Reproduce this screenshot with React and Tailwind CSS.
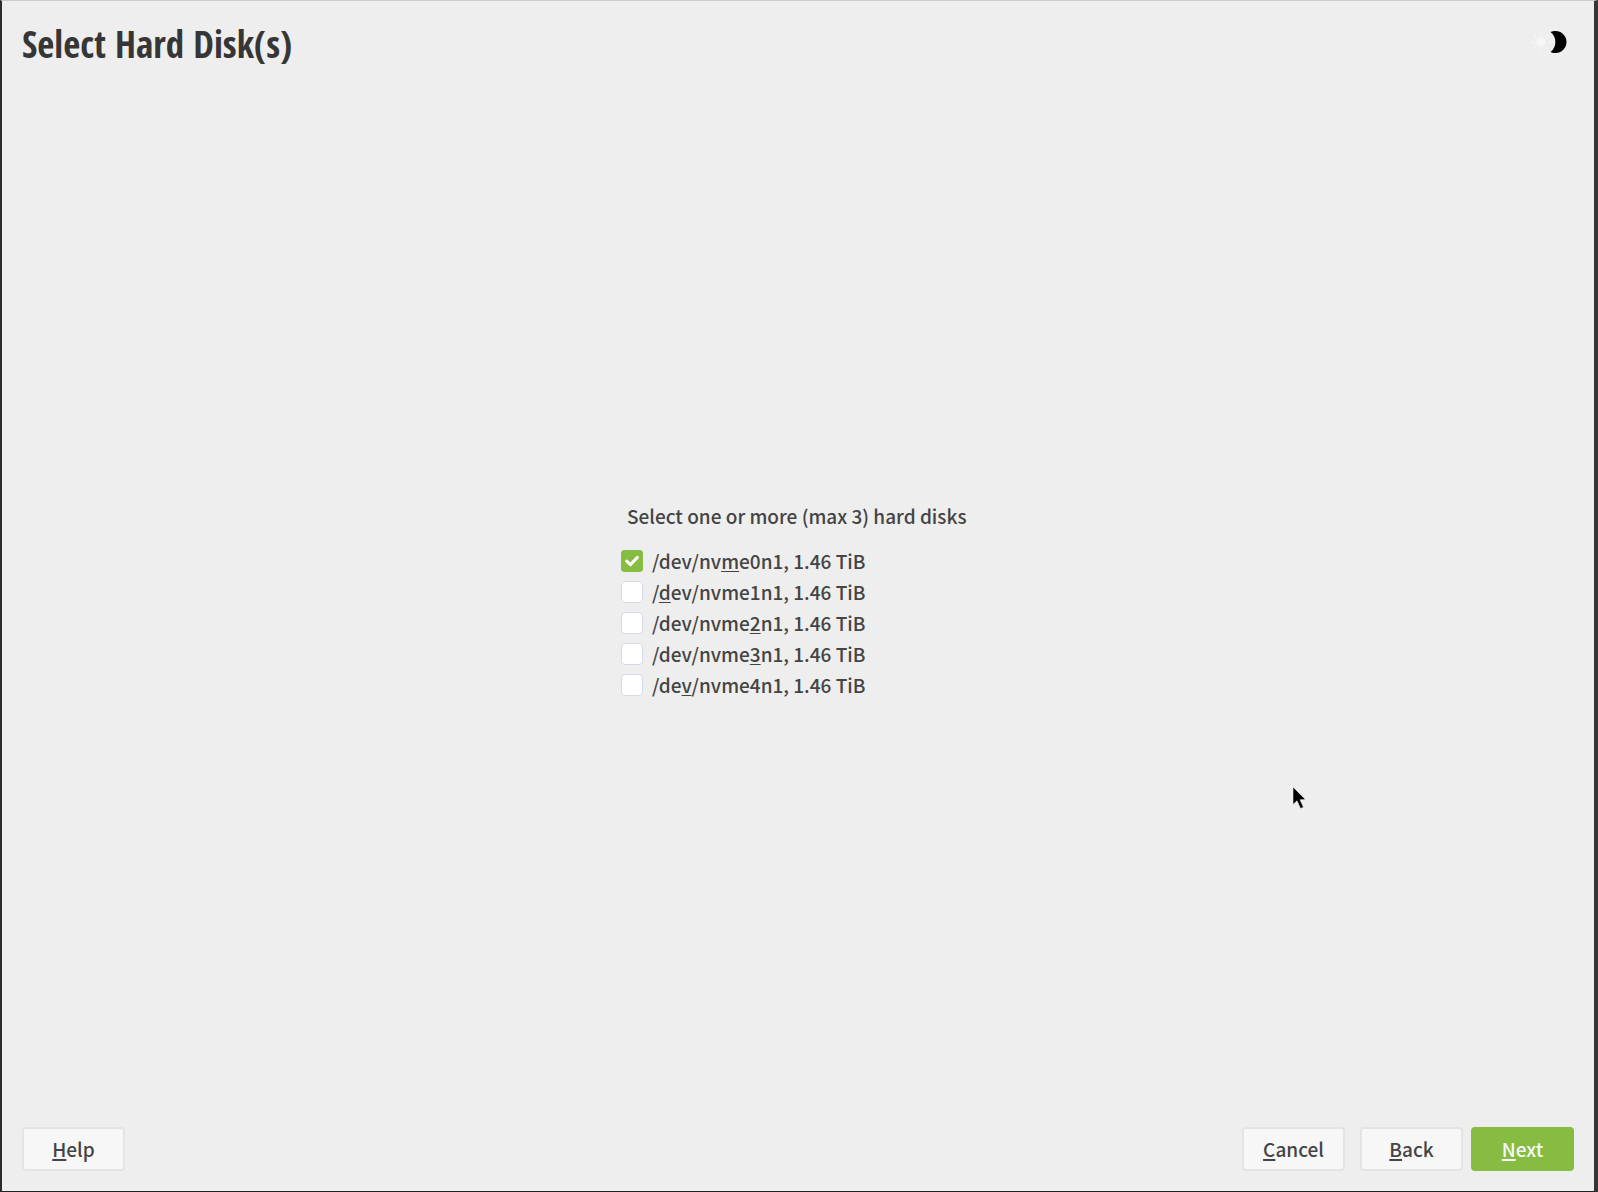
import { useState } from "react";

const disks = [
  { before: "/dev/nv", key: "m", after: "e0n1, 1.46 TiB" },
  { before: "/", key: "d", after: "ev/nvme1n1, 1.46 TiB" },
  { before: "/dev/nvme", key: "2", after: "n1, 1.46 TiB" },
  { before: "/dev/nvme", key: "3", after: "n1, 1.46 TiB" },
  { before: "/de", key: "v", after: "/nvme4n1, 1.46 TiB" },
];

function Mnemonic({ children }) {
  return <span className="underline decoration-1 underline-offset-2">{children}</span>;
}

function DiskOption({ disk, checked, onChange }) {
  return (
    <label className="flex h-[31px] items-center gap-[9px]">
      <span className="grid size-[22px] shrink-0 place-items-center">
        <input
          type="checkbox"
          checked={checked}
          onChange={onChange}
          className="col-start-1 row-start-1 size-[22px] appearance-none rounded-[4px] border border-[#d5d9ea] bg-white checked:rounded-[3px] checked:border-[#86bc42] checked:bg-[#86bc42]"
        />
        {checked && (
          <svg viewBox="0 0 22 22" className="pointer-events-none col-start-1 row-start-1 size-[22px]" aria-hidden="true">
            <path d="M5.6 11.2 L9.4 14.6 L16.4 7.4" fill="none" stroke="#fff" strokeWidth="3" strokeLinecap="round" strokeLinejoin="round" />
          </svg>
        )}
      </span>
      <span className="whitespace-nowrap">
        {disk.before}
        <Mnemonic>{disk.key}</Mnemonic>
        {disk.after}
      </span>
    </label>
  );
}

function FooterButton({ label, primary }) {
  const look = primary
    ? "border-[#86bc42] bg-[#86bc42] text-[#f7f7f7]"
    : "border-[#e4e4e4] bg-[#f7f7f7]";
  return (
    <button type="button" className={`h-11 w-[103px] rounded-[4px] border-2 leading-7 ${look}`}>
      <span className="underline decoration-2 underline-offset-2">{label[0]}</span>
      {label.slice(1)}
    </button>
  );
}

function ThemeIcon() {
  return (
    <svg viewBox="0 0 40 24" className="h-6 w-10" aria-hidden="true">
      <g fill="#f8f8f8" stroke="#f4f4f4" strokeWidth="2" strokeLinecap="round">
        <circle cx="13" cy="12" r="4" />
        <path d="M13 3v1M13 20v1M4 12h1M21 12h1M7 6l.6 .6M18.4 17.4l.6 .6M7 18l.6-.6M18.4 6.6l.6-.6" />
      </g>
      <path d="M22.5 2 C24.5 1 26 1 27.5 1 A11 11 0 0 1 27.5 23 C26 23 24.5 23 22.5 22 C29 17.5 29 6.5 22.5 2Z" fill="#000" />
    </svg>
  );
}

export default function App() {
  const [selected, setSelected] = useState([true, false, false, false, false]);
  const toggle = (i) => setSelected(selected.map((v, j) => (j === i ? !v : v)));

  return (
    <div className="relative flex min-h-screen flex-col border-t border-r-4 border-b border-l-2 border-t-[#cccccc] border-r-[#343637] border-b-[#222222] border-l-[#2b2b2d] bg-[#eeeeee] px-5 pb-5 font-['Noto_Sans_CJK_SC',sans-serif] text-[19px] leading-7 font-medium text-[#444444]">
      <header className="flex items-center justify-between pt-5 pr-1.5">
        <h1 className="font-['Open_Sans_Condensed','Open_Sans',sans-serif] text-[37px] leading-[46px] font-bold text-[#363636]">
          Select Hard Disk(s)
        </h1>
        <button type="button" aria-label="Toggle theme" className="mb-1">
          <ThemeIcon />
        </button>
      </header>

      <main className="flex flex-1 items-center justify-center pt-2">
        <fieldset className="w-[354px]">
          <legend className="mb-4 px-1.5 whitespace-nowrap">Select one or more (max 3) hard disks</legend>
          {disks.map((disk, i) => (
            <DiskOption key={i} disk={disk} checked={selected[i]} onChange={() => toggle(i)} />
          ))}
        </fieldset>
      </main>

      <footer className="flex items-center justify-between">
        <FooterButton label="Help" />
        <div className="flex gap-2">
          <div className="flex gap-[15px]">
            <FooterButton label="Cancel" />
            <FooterButton label="Back" />
          </div>
          <FooterButton label="Next" primary />
        </div>
      </footer>

      <svg viewBox="0 0 14 24" className="pointer-events-none absolute top-[66%] left-[81%] h-6 w-3.5" aria-hidden="true">
        <path d="M1 1 L1 18.5 L5 14.8 L8.5 22.5 L11.5 21.2 L8 13.8 L13.5 13.5Z" fill="#000" stroke="#fff" strokeWidth=".5" />
      </svg>
    </div>
  );
}
